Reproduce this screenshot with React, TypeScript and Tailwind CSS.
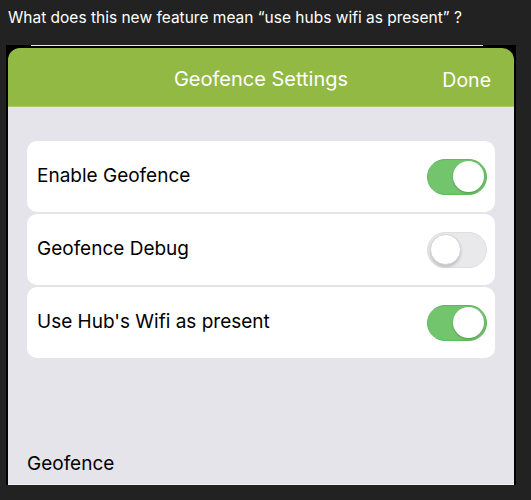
import React from 'react';

const Toggle = ({ on }: { on: boolean }) => {
  if (on) {
    return (
      <div className="flex h-[36px] w-[60px] items-center justify-end rounded-full border border-[#5fb85c] bg-[#72c46d] p-[2px]">
        <div className="h-[31px] w-[31px] rounded-full bg-white shadow-[0_1px_2px_rgba(0,0,0,0.25)]" />
      </div>
    );
  }
  return (
    <div className="flex h-[36px] w-[60px] items-center justify-start rounded-full border border-[#dedede] bg-[#e9e9eb] p-[2px]">
      <div className="h-[31px] w-[31px] rounded-full border border-[#d4d4d4] bg-white shadow-[0_2px_3px_rgba(0,0,0,0.18)]" />
    </div>
  );
};

const rows = [
  { label: 'Enable Geofence', on: true },
  { label: 'Geofence Debug', on: false },
  { label: "Use Hub's Wifi as present", on: true },
];

export default function App() {
  return (
    <div className="h-[500px] w-[531px] overflow-hidden bg-[#222222]">
      {/* Post text */}
      <p className="pl-2 pt-[8px] font-['Inter',sans-serif] text-[15.5px] leading-[20px] text-white">
        What does this new feature mean “use hubs wifi as present” ?
      </p>

      {/* Screenshot */}
      <div className="ml-[6px] mt-[17px] w-[510px] bg-black pl-[2px] pr-[2px]">
        <div className="ml-[23px] h-[1px] w-[452px] bg-[#e8e8e8]" />
        <div className="h-[2px]" />
        <div className="overflow-hidden rounded-t-[12px] border-b border-[#f2f2f2] font-['Inter',sans-serif]">
          <div className="relative flex h-[59px] items-center justify-center border-b border-[#a9cc6a] bg-[#92b944] pt-[3px]">
            <span className="text-[20px] text-white">Geofence Settings</span>
            <span className="absolute right-[23px] top-[18px] text-[19.5px] text-white">Done</span>
          </div>
          <div className="flex h-[377px] flex-col bg-[#e5e4ea] px-[19px] pt-[34px]">
            <div className="flex flex-col gap-[2px]">
              {rows.map((row) => (
                <div
                  key={row.label}
                  className="flex h-[71px] items-center justify-between rounded-[10px] bg-white pl-[10px] pr-[8px]"
                >
                  <span className="text-[19px] text-black">{row.label}</span>
                  <Toggle on={row.on} />
                </div>
              ))}
            </div>
            <div className="mt-auto pb-[6px] text-[19px] text-black">Geofence</div>
          </div>
        </div>
      </div>
    </div>
  );
}
